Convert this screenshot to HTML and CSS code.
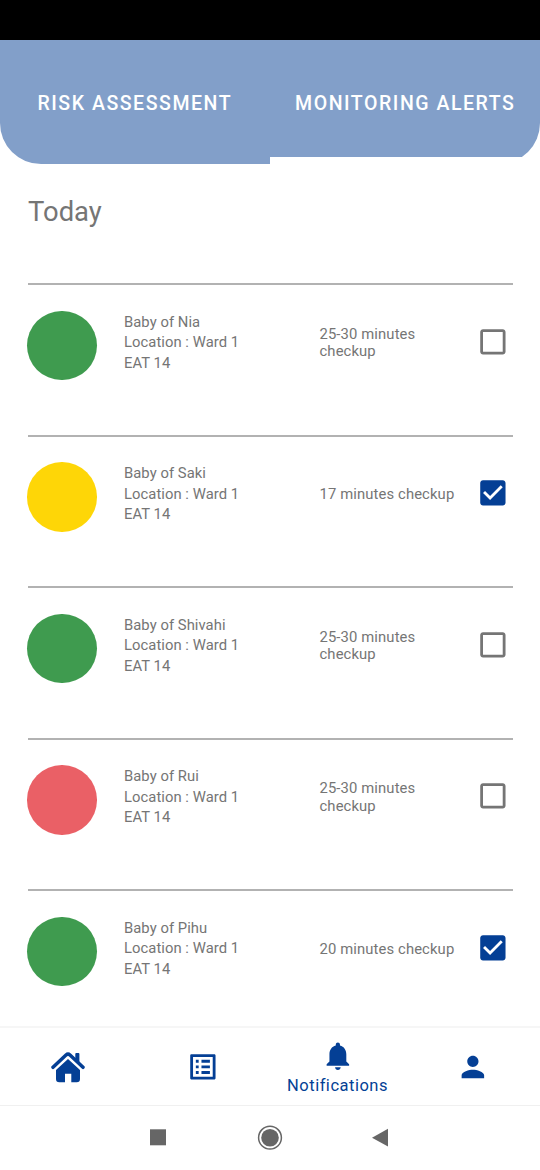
FILE: index.html
```
<!DOCTYPE html>
<html lang="en">
<head>
<meta charset="utf-8">
<title>Monitoring Alerts</title>
<link rel="stylesheet" href="styles.css">
</head>
<body>
<svg class="defs" aria-hidden="true">
  <symbol id="box" viewBox="0 0 24 24"><path fill="currentColor" d="M19 5v14H5V5h14m0-2H5c-1.1 0-2 .9-2 2v14c0 1.1.9 2 2 2h14c1.1 0 2-.9 2-2V5c0-1.1-.9-2-2-2z"/></symbol>
  <symbol id="box-checked" viewBox="0 0 24 24"><path fill="currentColor" d="M19 3H5c-1.1 0-2 .9-2 2v14c0 1.1.9 2 2 2h14c1.1 0 2-.9 2-2V5c0-1.1-.9-2-2-2zm-9 14l-5-5 1.41-1.41L10 14.17l7.59-7.59L19 8l-9 9z"/></symbol>
</svg>
<div class="screen">
  <div class="status-bar"></div>
  <header class="tabs">
    <div class="tab">RISK ASSESSMENT</div>
    <div class="tab tab-active">MONITORING ALERTS</div>
  </header>
  <main class="content">
    <h1 class="heading">Today</h1>
    <section class="row">
      <span class="dot green"></span>
      <p class="info">Baby of Nia<br>Location : Ward 1<br>EAT 14</p>
      <p class="task">25-30 minutes checkup</p>
      <svg class="check"><use href="#box"/></svg>
    </section>
    <section class="row">
      <span class="dot yellow"></span>
      <p class="info">Baby of Saki<br>Location : Ward 1<br>EAT 14</p>
      <p class="task">17 minutes checkup</p>
      <svg class="check checked"><use href="#box-checked"/></svg>
    </section>
    <section class="row">
      <span class="dot green"></span>
      <p class="info">Baby of Shivahi<br>Location : Ward 1<br>EAT 14</p>
      <p class="task">25-30 minutes checkup</p>
      <svg class="check"><use href="#box"/></svg>
    </section>
    <section class="row">
      <span class="dot red"></span>
      <p class="info">Baby of Rui<br>Location : Ward 1<br>EAT 14</p>
      <p class="task">25-30 minutes checkup</p>
      <svg class="check"><use href="#box"/></svg>
    </section>
    <section class="row">
      <span class="dot green"></span>
      <p class="info">Baby of Pihu<br>Location : Ward 1<br>EAT 14</p>
      <p class="task">20 minutes checkup</p>
      <svg class="check checked"><use href="#box-checked"/></svg>
    </section>
  </main>
  <nav class="bottom-nav">
    <div class="nav-item">
      <svg class="home" viewBox="0 0 34 32"><path d="M2 16.3 15 4q2-1.8 4 0L32 16.3" fill="none" stroke="currentColor" stroke-width="3.5" stroke-linecap="round" stroke-linejoin="round"/><path d="M24.3 3q0-.9.9-.9h2.3q.9 0 .9.9v9.3l-4.1-3.6z" fill="currentColor"/><path d="M17 8 29 19v9q0 3.3-3.3 3.3h-5.4v-8.5h-6.3v8.5H8.3q-3.3 0-3.3-3.3V19z" fill="currentColor"/></svg>
    </div>
    <div class="nav-item">
      <svg class="icon" viewBox="0 0 24 24"><path fill="currentColor" d="M19 5v14H5V5h14m1.1-2H3.9c-.5 0-.9.4-.9.9v16.2c0 .4.4.9.9.9h16.2c.4 0 .9-.5.9-.9V3.9c0-.5-.5-.9-.9-.9zM11 7h6v2h-6V7zm0 4h6v2h-6v-2zm0 4h6v2h-6v-2zM7 7h2v2H7V7zm0 4h2v2H7v-2zm0 4h2v2H7v-2z"/></svg>
    </div>
    <div class="nav-item selected">
      <svg class="icon" viewBox="0 0 24 24"><path fill="currentColor" d="M12 22c1.1 0 2-.9 2-2h-4c0 1.1.89 2 2 2zm6-6v-5c0-3.07-1.64-5.64-4.5-6.32V4c0-.83-.67-1.5-1.5-1.5s-1.5.67-1.5 1.5v.68C7.63 5.36 6 7.92 6 11v5l-2 2v1h16v-1l-2-2z"/></svg>
      <span class="nav-label">Notifications</span>
    </div>
    <div class="nav-item">
      <svg class="icon" viewBox="0 0 24 24"><path fill="currentColor" d="M12 12c2.21 0 4-1.79 4-4s-1.79-4-4-4-4 1.79-4 4 1.79 4 4 4zm0 2c-2.67 0-8 1.34-8 4v2h16v-2c0-2.66-5.33-4-8-4z"/></svg>
    </div>
  </nav>
  <footer class="system-bar">
    <svg width="26" height="26" viewBox="0 0 26 26"><rect x="4" y="4.300" width="16" height="16" fill="#666"/></svg>
    <svg width="26" height="26" viewBox="0 0 26 26"><circle cx="13" cy="12.700" r="11.400" fill="none" stroke="#666" stroke-width="1.500"/><circle cx="13" cy="12.700" r="8.800" fill="#666"/></svg>
    <svg width="26" height="26" viewBox="0 0 26 26"><path d="M4 12.700 20 3.800v17.800z" fill="#666"/></svg>
  </footer>
</div>
</body>
</html>
```
FILE: styles.css
```
* { box-sizing: border-box; }
body {
  margin: 0;
  background: #fff;
  font-family: Roboto, "Liberation Sans", sans-serif;
  color: #757575;
}
.defs { display: none; }
.screen {
  width: 540px;
  height: 1170px;
  display: flex;
  flex-direction: column;
  overflow: hidden;
}
.status-bar { flex: none; height: 40px; background: #000; }
.tabs {
  flex: none;
  display: flex;
  height: 124px;
  border-radius: 0 0 41px 41px;
  overflow: hidden;
}
.tab {
  flex: 1;
  padding-top: 52px;
  background: #829fc9;
  text-align: center;
  white-space: nowrap;
  font-size: 19.5px;
  line-height: 24px;
  font-weight: 500;
  letter-spacing: 1.55px;
  color: #fff;
}
.tab-active { height: 117px; padding-left: 1px; }
.content {
  flex: 1;
  min-height: 0;
  overflow: hidden;
  padding: 0 27.5px;
}
.heading {
  margin: 0;
  height: 119.3px;
  padding: 32px 0 0 .5px;
  font-size: 27.4px;
  line-height: 33px;
  font-weight: 400;
}
.row {
  display: grid;
  grid-template-columns: 96.5px 195.5px 144px auto;
  height: 151.5px;
  border-top: 2px solid #b2b2b2;
  align-items: start;
}
.dot {
  width: 69.5px;
  height: 69.5px;
  margin: 25.5px 0 0 -.5px;
  border-radius: 50%;
}
.green { background: #3f9b4f; }
.yellow { background: #fed607; }
.red { background: #ea6066; }
.info {
  margin: 26.5px 0 0;
  font-size: 14.8px;
  line-height: 20.5px;
  letter-spacing: .05px;
}
.task {
  display: flex;
  align-items: center;
  height: 36px;
  margin: 40.2px 0 0;
  padding-right: 8px;
  font-size: 14.8px;
  line-height: 17.5px;
  letter-spacing: .12px;
}
.check {
  width: 33.75px;
  height: 33.75px;
  margin: 39.7px 0 0 12px;
  color: #757575;
}
.checked { color: #043f95; }
.bottom-nav {
  flex: none;
  display: flex;
  height: 80px;
  border-top: 2px solid #f6f6f6;
  border-bottom: 1px solid #f0f0f0;
  color: #043f95;
}
.nav-item {
  flex: 1;
  display: flex;
  flex-direction: column;
  align-items: center;
  justify-content: center;
}
.icon { width: 33.75px; height: 33.75px; }
.home { width: 34px; height: 32px; }
.selected { justify-content: flex-start; padding-top: 11px; }
.nav-label { margin-top: 3px; font-size: 16.5px; line-height: 20px; letter-spacing: .5px; }
.system-bar {
  flex: none;
  display: flex;
  justify-content: center;
  gap: 85px;
  height: 64px;
  padding-top: 19px;
}
```
